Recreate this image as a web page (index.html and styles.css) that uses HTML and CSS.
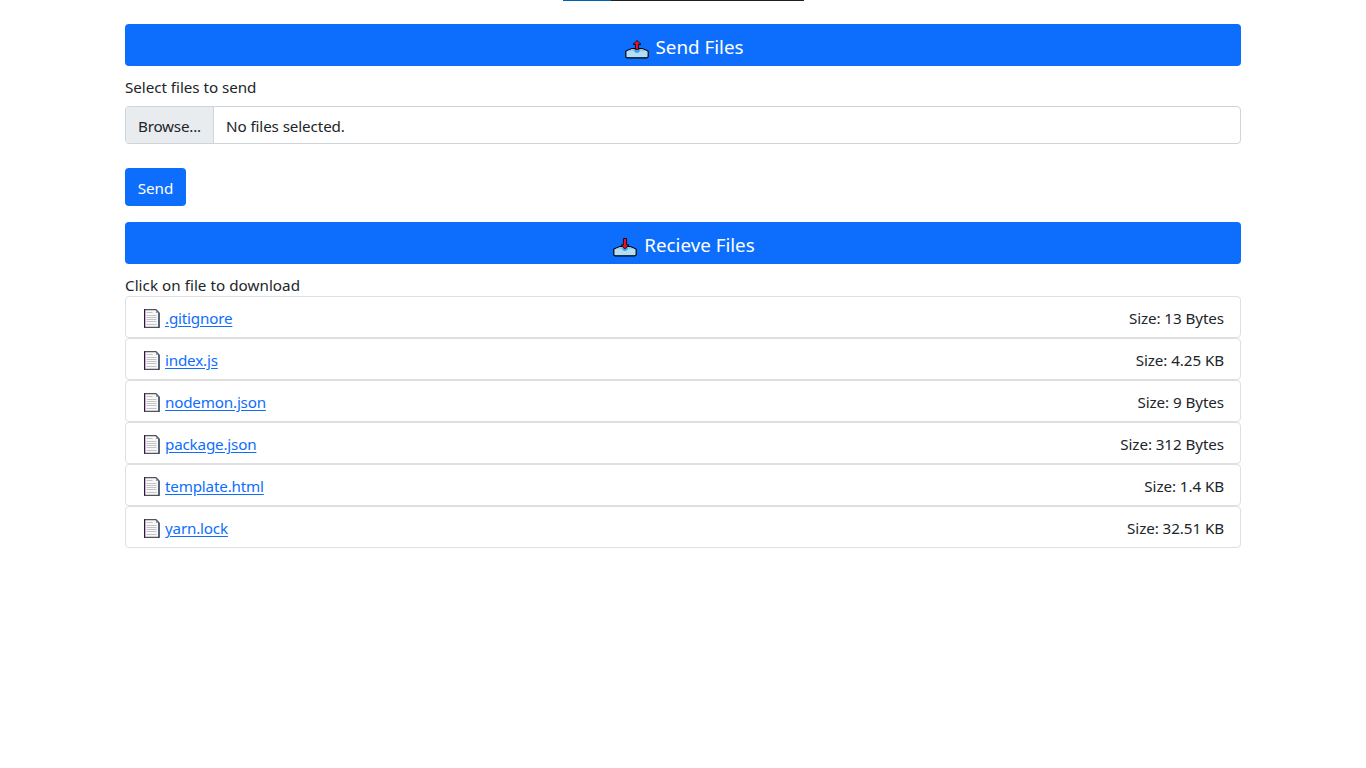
FILE: index.html
```html
<!DOCTYPE html>
<html lang="en">
<head>
<meta charset="utf-8">
<title>File Share</title>
<link rel="stylesheet" href="styles.css">
</head>
<body>
<svg class="symbols" width="0" height="0" aria-hidden="true">
  <symbol id="tray" viewBox="0 0 24 20">
    <path d="M.8 12.500Q1 11.800 2 11.500L6.500 9.700h11l4.500 1.800q1 .3 1.200 1v4.800q0 1.500-1.500 1.500H2.300q-1.500 0-1.500-1.500z" fill="#b3def5" stroke="#000" stroke-width="1.200" stroke-linejoin="round"/>
    <path d="M2 12.300 6.700 10.300h10.600l4.700 2h-7.200q-2.800 3.700-5.600 0z" fill="#92cdf1"/>
    <path d="M9.200 10.300h5.600v2q-2.800 3.600-5.600 0z" fill="#3f9fe8"/>
  </symbol>
  <symbol id="page" viewBox="0 0 16 19">
    <path d="M.7.700h11.300l3 3v14.600H.7z" fill="#f8f8f8" stroke="#55535a" stroke-width="1.300"/>
    <path d="M.5.200v18.500" stroke="#37104a"/>
    <path d="M15 4v14.700" stroke="#123b60"/>
    <path d="M12 1.500v2.500h2.500z" fill="#999"/>
    <path d="M2.500 3.500h6M2.500 6.500h10M2.500 8.500h10M2.500 10.500h10M2.500 12.500h10M2.500 15.500h10" stroke="#c4c3c7" stroke-width="1"/>
  </symbol>
</svg>
<div class="progress"></div>
<main class="container">
  <h1 class="banner">
    <svg class="tray" viewBox="0 0 24 20"><use href="#tray"/><path d="M12 1.500 16 5.400h-2.400v5h-3.200v-5H8z" fill="#e81123" stroke="#000" stroke-width=".8"/></svg>
    <span class="title-send">Send Files</span>
  </h1>
  <label class="label select">Select files to send</label>
  <div class="file-input">
    <span class="browse"><span>Browse...</span></span>
    <span class="empty">No files selected.</span>
  </div>
  <button class="send">Send</button>
  <h1 class="banner">
    <svg class="tray" viewBox="0 0 24 20"><use href="#tray"/><path d="M12 11.800 8 7.900h2.400V1.500h3.200v6.400H16z" fill="#e81123" stroke="#000" stroke-width=".8"/></svg>
    <span class="title-receive">Recieve Files</span>
  </h1>
  <p class="label click">Click on file to download</p>
  <ul class="files">
    <li><svg class="page"><use href="#page"/></svg><a href="#">.gitignore</a><span class="size">Size: 13 Bytes</span></li>
    <li><svg class="page"><use href="#page"/></svg><a href="#">index.js</a><span class="size">Size: 4.25 KB</span></li>
    <li><svg class="page"><use href="#page"/></svg><a href="#">nodemon.json</a><span class="size">Size: 9 Bytes</span></li>
    <li><svg class="page"><use href="#page"/></svg><a href="#">package.json</a><span class="size">Size: 312 Bytes</span></li>
    <li><svg class="page"><use href="#page"/></svg><a href="#">template.html</a><span class="size">Size: 1.4 KB</span></li>
    <li><svg class="page"><use href="#page"/></svg><a href="#">yarn.lock</a><span class="size">Size: 32.51 KB</span></li>
  </ul>
</main>
</body>
</html>
```
FILE: styles.css
```css
* { box-sizing: border-box; }
body {
  margin: 0;
  background: #fff;
  color: #212529;
  font: 15.2px/24px "Segoe UI", "Noto Sans", sans-serif;
}
.symbols { position: absolute; }
.progress {
  width: 241px;
  height: 1px;
  margin-left: 563px;
  background: linear-gradient(to right, #0063b1 48px, #1f1f1f 48px);
}
.container { width: 1116px; margin: 23px 0 0 125px; }
.banner {
  display: flex;
  justify-content: center;
  gap: 7px;
  height: 42px;
  margin: 0;
  padding: 8px 0 0 2px;
  border-radius: 4px;
  background: #0d6efd;
  color: #fff;
  font-size: 18.8px;
  font-weight: 400;
  line-height: 30px;
}
.tray { width: 24px; height: 20px; margin-top: 7px; }
.label { display: block; height: 24px; margin: 0; }
.select { margin: 9px 0 7px; letter-spacing: -0.04px; }
.file-input {
  display: flex;
  height: 38px;
  border: 1px solid #ced4da;
  border-radius: 4px;
  overflow: hidden;
  line-height: 38px;
}
.browse {
  width: 88px;
  padding-left: 12px;
  border-right: 1px solid #ced4da;
  background: #e9ecef;
  letter-spacing: -0.2px;
}
.empty { padding-left: 12px; letter-spacing: -0.1px; }
.send {
  display: block;
  width: 61px;
  height: 38px;
  margin: 24px 0 16px;
  padding: 2px 0 0;
  border: 0;
  border-radius: 4px;
  background: #0d6efd;
  color: #fff;
  font: inherit;
}
.click { margin-top: 9px; height: 23px; letter-spacing: 0.04px; }
.files { margin: 0; padding: 0; list-style: none; }
.files li {
  display: flex;
  height: 42px;
  padding: 9px 16px 0 17px;
  border: 1px solid #dfdfdf;
  border-radius: 4px;
}
.page { width: 16px; height: 19px; margin: 3px 5px 0 1px; }
.files a {
  color: #0d6efd;
  letter-spacing: -0.18px;
  text-decoration: underline;
  text-underline-offset: 2px;
}
.size { margin-left: auto; letter-spacing: -0.08px; }
```
